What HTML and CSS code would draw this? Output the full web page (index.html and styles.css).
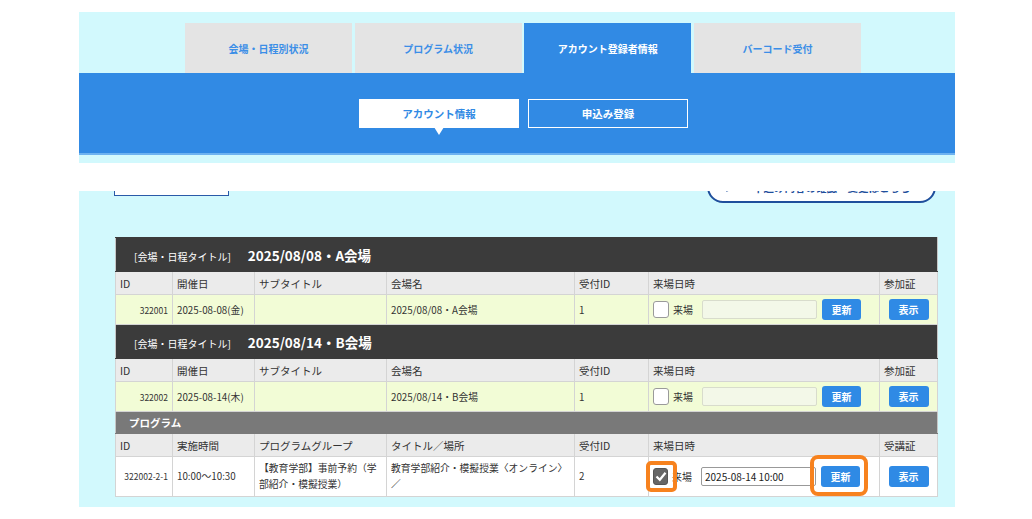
FILE: index.html
```html
<!DOCTYPE html>
<html lang="ja">
<head>
  <meta charset="utf-8">
  <title>アカウント登録者情報</title>
  <link rel="stylesheet" href="styles.css">
</head>
<body>
  <header class="site-header">
    <div class="nav-wrap">
      <ul class="main-tabs">
        <li>会場・日程別状況</li>
        <li>プログラム状況</li>
        <li class="active">アカウント登録者情報</li>
        <li>バーコード受付</li>
      </ul>
      <div class="sub-band">
        <div class="sub-tabs">
          <a class="sub-tab active">アカウント情報</a>
          <a class="sub-tab">申込み登録</a>
        </div>
      </div>
    </div>
  </header>

  <main class="content">
    <div class="toolbar">
      <a class="btn-back">一覧へ戻る</a>
      <a class="btn-pill">
        <svg width="14" height="12" viewBox="0 0 14 12"><path d="M1 1 L13 6 L1 11 L4 6 Z" fill="#1f4f9c"/></svg>
        <span>申込み内容の確認・変更はこちら</span>
      </a>
    </div>

    <table class="visit-table">
      <colgroup>
        <col style="width:57px">
        <col style="width:82px">
        <col style="width:132px">
        <col style="width:188px">
        <col style="width:74px">
        <col style="width:231px">
        <col style="width:58px">
      </colgroup>
      <tbody>
        <tr class="title-row">
          <td colspan="7"><span class="title-label">[会場・日程タイトル]</span><span class="title-text">2025/08/08・A会場</span></td>
        </tr>
        <tr class="head-row">
          <th>ID</th><th>開催日</th><th>サブタイトル</th><th>会場名</th><th>受付ID</th><th>来場日時</th><th>参加証</th>
        </tr>
        <tr class="data-row">
          <td class="num">322001</td>
          <td>2025-08-08(金)</td>
          <td></td>
          <td>2025/08/08・A会場</td>
          <td>1</td>
          <td>
            <div class="visit">
              <span class="check"></span>
              <span class="visit-label">来場</span>
              <input class="visit-input empty" type="text" value="">
              <button class="btn-blue">更新</button>
            </div>
          </td>
          <td class="center"><button class="btn-blue">表示</button></td>
        </tr>

        <tr class="title-row">
          <td colspan="7"><span class="title-label">[会場・日程タイトル]</span><span class="title-text">2025/08/14・B会場</span></td>
        </tr>
        <tr class="head-row">
          <th>ID</th><th>開催日</th><th>サブタイトル</th><th>会場名</th><th>受付ID</th><th>来場日時</th><th>参加証</th>
        </tr>
        <tr class="data-row">
          <td class="num">322002</td>
          <td>2025-08-14(木)</td>
          <td></td>
          <td>2025/08/14・B会場</td>
          <td>1</td>
          <td>
            <div class="visit">
              <span class="check"></span>
              <span class="visit-label">来場</span>
              <input class="visit-input empty" type="text" value="">
              <button class="btn-blue">更新</button>
            </div>
          </td>
          <td class="center"><button class="btn-blue">表示</button></td>
        </tr>

        <tr class="program-row">
          <td colspan="7">プログラム</td>
        </tr>
        <tr class="head-row">
          <th>ID</th><th>実施時間</th><th>プログラムグループ</th><th>タイトル／場所</th><th>受付ID</th><th>来場日時</th><th>受講証</th>
        </tr>
        <tr class="program-data">
          <td class="num">322002-2-1</td>
          <td>10:00〜10:30</td>
          <td>【教育学部】事前予約（学部紹介・模擬授業）</td>
          <td>教育学部紹介・模擬授業〈オンライン〉／</td>
          <td>2</td>
          <td>
            <div class="visit">
              <span class="highlight small"><span class="check checked"><svg width="12" height="11" viewBox="0 0 12 11"><path d="M1.5 5.5 L4.8 8.8 L10.5 1.8" fill="none" stroke="#fff" stroke-width="2.2"/></svg></span></span>
              <span class="visit-label">来場</span>
              <input class="visit-input" type="text" value="2025-08-14 10:00">
              <span class="highlight large"><button class="btn-blue">更新</button></span>
            </div>
          </td>
          <td class="center"><button class="btn-blue">表示</button></td>
        </tr>
      </tbody>
    </table>
  </main>
</body>
</html>
```

FILE: styles.css
```css
* {
  box-sizing: border-box;
}

body {
  margin: 0;
  background: #fff;
  color: #333;
  font-family: "Noto Sans CJK JP", "Noto Sans", sans-serif;
}

/* header overlays the scrolled content */
.site-header {
  position: absolute;
  top: 0;
  left: 0;
  right: 0;
  height: 191px;
  background: #fff;
  z-index: 10;
}

.nav-wrap {
  margin: 12px 0 0 79px;
  width: 876px;
  background: #d2f9fd;
  padding: 11px 0 8px;
}

.main-tabs {
  list-style: none;
  margin: 0;
  padding: 0 0 0 106px;
  display: flex;
  gap: 2.67px;
}

.main-tabs li {
  width: 167px;
  height: 50px;
  background: #e4e4e4;
  color: #3b8ee7;
  font-size: 10px;
  font-weight: bold;
  display: flex;
  align-items: center;
  justify-content: center;
}

.main-tabs li.active {
  background: #318ae4;
  color: #fff;
}

.sub-band {
  height: 82px;
  background: #318ae4;
  border-bottom: 2px solid #6db2f0;
  padding: 26px 0 0 280px;
}

.sub-tabs {
  display: flex;
  gap: 9px;
}

.sub-tab {
  position: relative;
  width: 160px;
  height: 29px;
  border: 1px solid #fff;
  color: #fff;
  font-size: 10.5px;
  font-weight: bold;
  display: flex;
  align-items: center;
  justify-content: center;
}

.sub-tab.active {
  background: #fff;
  color: #318ae4;
}

.sub-tab.active::after {
  content: "";
  position: absolute;
  top: 100%;
  left: 50%;
  margin-left: -5px;
  border-left: 5px solid transparent;
  border-right: 5px solid transparent;
  border-top: 8px solid #fff;
}

/* content */
.content {
  margin: 140px 0 0 79px;
  width: 876px;
  background: #d2f9fd;
  padding: 26px 18px 10px 36px;
}

.toolbar {
  display: flex;
  justify-content: space-between;
  align-items: flex-start;
  height: 38px;
  margin-bottom: 33px;
}

.btn-back {
  width: 115px;
  height: 30px;
  margin-left: -1px;
  background: #fff;
  border: 1px solid #2a5aa8;
  border-top-width: 0;
  color: #2a5aa8;
  font-size: 11px;
  font-weight: bold;
  display: flex;
  align-items: flex-end;
  justify-content: center;
  padding-bottom: 3px;
}

.btn-pill {
  width: 229px;
  height: 36px;
  margin-top: 1px;
  margin-right: 1px;
  background: #fff;
  border: 2px solid #1f4f9c;
  border-radius: 16px;
  color: #1f4f9c;
  font-size: 10.5px;
  font-weight: bold;
  white-space: nowrap;
  display: flex;
  align-items: center;
  gap: 14px;
  padding: 4px 0 0 16px;
}

.visit-table {
  width: 822px;
  border-collapse: collapse;
  table-layout: fixed;
  border: 1px solid #c6c6c6;
  font-size: 9.8px;
}

.visit-table th,
.visit-table td {
  border: 1px solid #d4d4d4;
  padding: 0 4px;
  text-align: left;
  font-weight: normal;
}

.title-row td {
  height: 34px;
  background: #3b3b3b;
  border-color: #3b3b3b #c6c6c6;
  color: #fff;
  padding-left: 18px;
}

.title-label {
  font-size: 10px;
}

.title-text {
  margin-left: 17px;
  font-size: 13.5px;
  font-weight: bold;
}

.head-row th {
  height: 23px;
  background: #ebebeb;
  font-size: 10.5px;
  color: #333;
}

.data-row td {
  height: 30px;
  background: #f2fcd6;
}

.program-row td {
  height: 22px;
  background: #797979;
  border-color: #797979 #c6c6c6;
  color: #fff;
  font-size: 10.5px;
  font-weight: bold;
  padding-left: 13px;
}

.program-data td {
  height: 40px;
  background: #fff;
  line-height: 1.6;
}

.num {
  text-align: right !important;
  font-size: 8.5px;
}

.center {
  text-align: center !important;
}

.visit {
  display: flex;
  align-items: center;
}

.check {
  width: 16px;
  height: 17px;
  border: 1px solid #9a9a9a;
  border-radius: 3px;
  background: #fff;
  display: flex;
  align-items: center;
  justify-content: center;
  flex: none;
}

.check.checked {
  width: 15px;
  background: #666;
  border-color: #555;
}

.visit-label {
  margin-left: 4px;
  font-size: 10px;
}

.visit-input {
  width: 115px;
  height: 19px;
  margin-left: 9px;
  border: 1px solid #999;
  border-radius: 2px;
  background: #fff;
  font-family: inherit;
  font-size: 10px;
  color: #222;
  padding: 0 3px;
}

.visit-input.empty {
  background: #f3f8e8;
  border-color: #d8dccc;
}

.btn-blue {
  width: 39px;
  height: 21px;
  margin-left: 5px;
  border: none;
  border-radius: 3px;
  background: #2f8ae5;
  color: #fff;
  font-family: inherit;
  font-size: 10px;
  font-weight: bold;
  padding: 0;
}

.center .btn-blue {
  width: 40px;
  margin-left: 0;
}

/* orange highlight rings */
.highlight {
  position: relative;
  display: flex;
}

.highlight::after {
  content: "";
  position: absolute;
  border: 4px solid #f7821e;
}

.highlight.small::after {
  top: -7px;
  left: -7px;
  right: -9px;
  bottom: -7px;
  border-radius: 5px;
}

.highlight.large::after {
  top: -11px;
  left: -6px;
  right: -8px;
  bottom: -9px;
  border-radius: 8px;
}
```
